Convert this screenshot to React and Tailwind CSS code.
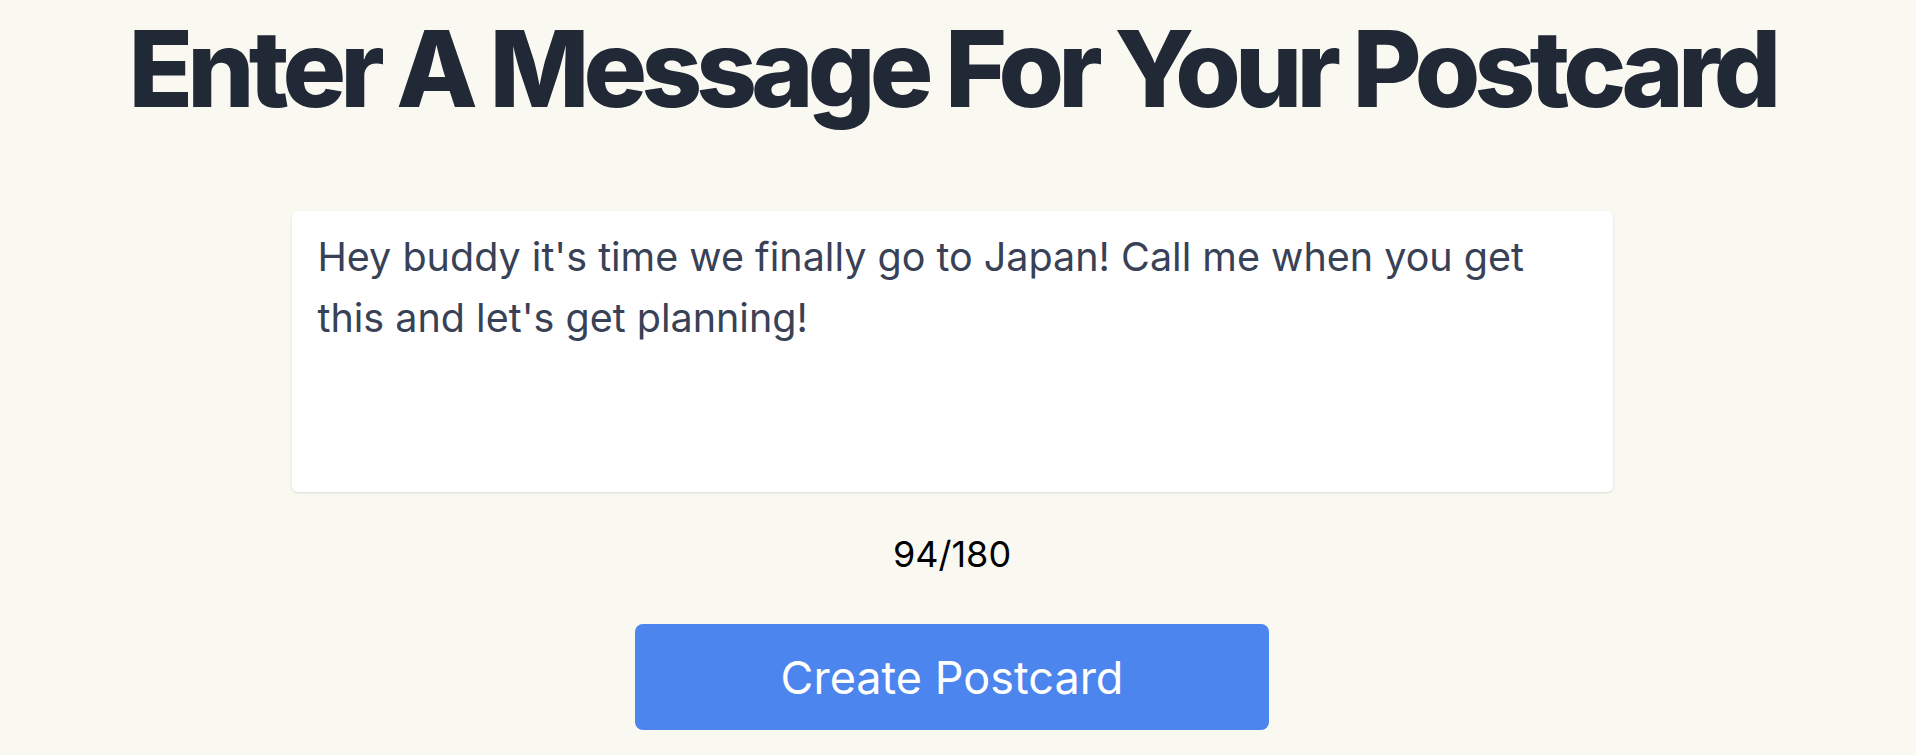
import { useState } from 'react';

const MAX_CHARS = 180;

export default function App() {
  const [message, setMessage] = useState(
    "Hey buddy it's time we finally go to Japan! Call me when you get this and let's get planning! "
  );

  return (
    <div className="min-h-screen w-full bg-[#faf9f1] font-['Inter','Noto_Sans',sans-serif] flex flex-col items-center pr-3">
      {/* Heading */}
      <h1 className="mt-4 text-[106px] leading-none font-extrabold tracking-[-0.055em] text-[#212836]">
        Enter A Message For Your Postcard
      </h1>

      {/* Message box */}
      <textarea
        value={message}
        maxLength={MAX_CHARS}
        onChange={(e) => setMessage(e.target.value)}
        className="mt-[89px] w-[1321px] h-[281px] resize-none rounded-md bg-white pl-[26px] pr-6 py-4 text-[39.5px] leading-[61px] text-[#384156] shadow-sm outline-none"
      />

      {/* Counter */}
      <p className="mt-[44px] text-[36px] leading-none text-black">
        {message.length}/{MAX_CHARS}
      </p>

      {/* Submit */}
      <button className="mt-[52px] w-[634px] h-[106px] rounded-lg bg-[#4c85ee] text-white text-[45px] leading-none flex items-center justify-center">
        Create Postcard
      </button>
    </div>
  );
}
